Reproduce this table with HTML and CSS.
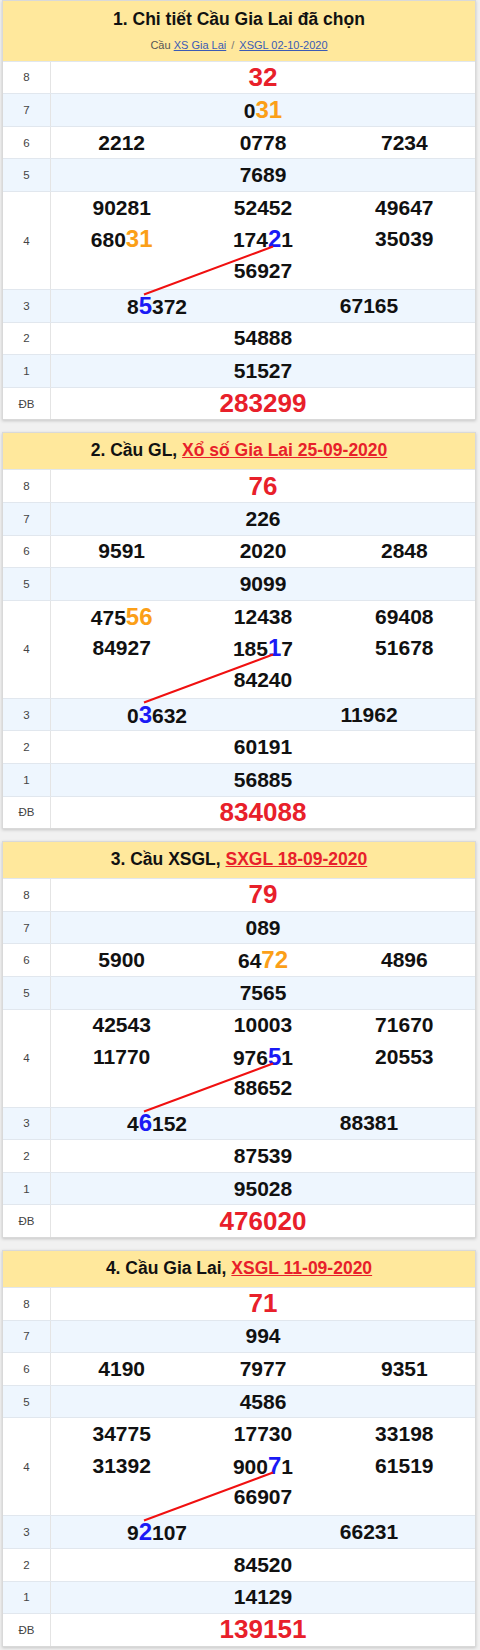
FILE: index.html
```html
<!DOCTYPE html>
<html lang="vi">
<head>
<meta charset="utf-8">
<title>Cầu Gia Lai</title>
<link rel="stylesheet" href="styles.css">
</head>
<body>

<section class="card">
  <div class="card-head card-head--main">
    <div class="title">1. Chi tiết Cầu Gia Lai đã chọn</div>
    <div class="sub">Cầu <a href="#">XS Gia Lai</a><span class="sep">/</span><a href="#">XSGL 02-10-2020</a></div>
  </div>
  <div class="tbody">
    <div class="row"><div class="lbl">8</div><div class="nums c1"><span class="red">32</span></div></div>
    <div class="row alt"><div class="lbl">7</div><div class="nums c1"><span>0<span class="o">31</span></span></div></div>
    <div class="row"><div class="lbl">6</div><div class="nums c3"><span>2212</span><span>0778</span><span>7234</span></div></div>
    <div class="row alt"><div class="lbl">5</div><div class="nums c1"><span>7689</span></div></div>
    <div class="row tall"><div class="lbl">4</div><div class="nums c3"><span>90281</span><span>52452</span><span>49647</span><span>680<span class="o">31</span></span><span>174<span class="b">2</span>1</span><span>35039</span><span class="mid">56927</span></div></div>
    <div class="row alt"><div class="lbl">3</div><div class="nums c2"><span>8<span class="b">5</span>372</span><span>67165</span></div></div>
    <div class="row"><div class="lbl">2</div><div class="nums c1"><span>54888</span></div></div>
    <div class="row alt"><div class="lbl">1</div><div class="nums c1"><span>51527</span></div></div>
    <div class="row"><div class="lbl">ĐB</div><div class="nums c1"><span class="red">283299</span></div></div>
    <svg class="line" aria-hidden="true"><line x1="270" y1="185.5" x2="141" y2="233.5"/></svg>
  </div>
</section>

<section class="card">
  <div class="card-head">
    <div class="title">2. Cầu GL, <a href="#">Xổ số Gia Lai 25-09-2020</a></div>
  </div>
  <div class="tbody">
    <div class="row"><div class="lbl">8</div><div class="nums c1"><span class="red">76</span></div></div>
    <div class="row alt"><div class="lbl">7</div><div class="nums c1"><span>226</span></div></div>
    <div class="row"><div class="lbl">6</div><div class="nums c3"><span>9591</span><span>2020</span><span>2848</span></div></div>
    <div class="row alt"><div class="lbl">5</div><div class="nums c1"><span>9099</span></div></div>
    <div class="row tall"><div class="lbl">4</div><div class="nums c3"><span>475<span class="o">56</span></span><span>12438</span><span>69408</span><span>84927</span><span>185<span class="b">1</span>7</span><span>51678</span><span class="mid">84240</span></div></div>
    <div class="row alt"><div class="lbl">3</div><div class="nums c2"><span>0<span class="b">3</span>632</span><span>11962</span></div></div>
    <div class="row"><div class="lbl">2</div><div class="nums c1"><span>60191</span></div></div>
    <div class="row alt"><div class="lbl">1</div><div class="nums c1"><span>56885</span></div></div>
    <div class="row"><div class="lbl">ĐB</div><div class="nums c1"><span class="red">834088</span></div></div>
    <svg class="line" aria-hidden="true"><line x1="270" y1="185.5" x2="141" y2="233.5"/></svg>
  </div>
</section>

<section class="card">
  <div class="card-head">
    <div class="title">3. Cầu XSGL, <a href="#">SXGL 18-09-2020</a></div>
  </div>
  <div class="tbody">
    <div class="row"><div class="lbl">8</div><div class="nums c1"><span class="red">79</span></div></div>
    <div class="row alt"><div class="lbl">7</div><div class="nums c1"><span>089</span></div></div>
    <div class="row"><div class="lbl">6</div><div class="nums c3"><span>5900</span><span>64<span class="o">72</span></span><span>4896</span></div></div>
    <div class="row alt"><div class="lbl">5</div><div class="nums c1"><span>7565</span></div></div>
    <div class="row tall"><div class="lbl">4</div><div class="nums c3"><span>42543</span><span>10003</span><span>71670</span><span>11770</span><span>976<span class="b">5</span>1</span><span>20553</span><span class="mid">88652</span></div></div>
    <div class="row alt"><div class="lbl">3</div><div class="nums c2"><span>4<span class="b">6</span>152</span><span>88381</span></div></div>
    <div class="row"><div class="lbl">2</div><div class="nums c1"><span>87539</span></div></div>
    <div class="row alt"><div class="lbl">1</div><div class="nums c1"><span>95028</span></div></div>
    <div class="row"><div class="lbl">ĐB</div><div class="nums c1"><span class="red">476020</span></div></div>
    <svg class="line" aria-hidden="true"><line x1="270" y1="185.5" x2="141" y2="233.5"/></svg>
  </div>
</section>

<section class="card">
  <div class="card-head">
    <div class="title">4. Cầu Gia Lai, <a href="#">XSGL 11-09-2020</a></div>
  </div>
  <div class="tbody">
    <div class="row"><div class="lbl">8</div><div class="nums c1"><span class="red">71</span></div></div>
    <div class="row alt"><div class="lbl">7</div><div class="nums c1"><span>994</span></div></div>
    <div class="row"><div class="lbl">6</div><div class="nums c3"><span>4190</span><span>7977</span><span>9351</span></div></div>
    <div class="row alt"><div class="lbl">5</div><div class="nums c1"><span>4586</span></div></div>
    <div class="row tall"><div class="lbl">4</div><div class="nums c3"><span>34775</span><span>17730</span><span>33198</span><span>31392</span><span>900<span class="b">7</span>1</span><span>61519</span><span class="mid">66907</span></div></div>
    <div class="row alt"><div class="lbl">3</div><div class="nums c2"><span>9<span class="b">2</span>107</span><span>66231</span></div></div>
    <div class="row"><div class="lbl">2</div><div class="nums c1"><span>84520</span></div></div>
    <div class="row alt"><div class="lbl">1</div><div class="nums c1"><span>14129</span></div></div>
    <div class="row"><div class="lbl">ĐB</div><div class="nums c1"><span class="red">139151</span></div></div>
    <svg class="line" aria-hidden="true"><line x1="270" y1="185.5" x2="141" y2="233.5"/></svg>
  </div>
</section>

</body>
</html>
```

FILE: styles.css
```css
html, body {
  margin: 0;
}
body {
  padding: 0 4px 0 2px;
  background: #f1f1f1;
  font-family: "Liberation Sans", Arial, sans-serif;
  color: #111;
}
.card {
  background: #fff;
  border: 1px solid #d9d9d9;
  margin-bottom: 12px;
  box-shadow: 0 1px 3px rgba(0, 0, 0, 0.18);
}
.card-head {
  background: #ffe89c;
  text-align: center;
  height: 36px;
  box-sizing: border-box;
  padding-top: 7px;
}
.card-head--main {
  height: 59.7px;
  padding-top: 8px;
}
.title {
  font-weight: bold;
  font-size: 17.5px;
  line-height: 21px;
  color: #111;
}
.title a {
  color: #e8202a;
}
.sub {
  font-size: 11px;
  line-height: 16px;
  color: #555;
  margin-top: 7px;
}
.sub a {
  color: #3b5bb5;
}
.sep {
  margin: 0 5px;
  color: #777;
}
.tbody {
  position: relative;
}
.row {
  display: grid;
  grid-template-columns: 48px 1fr;
  height: 32.6px;
  box-sizing: border-box;
  border-top: 1px solid #e1e7ee;
}
.row.alt {
  background: #eef6fe;
}
.row.tall {
  height: 98px;
}
.lbl {
  border-right: 1px solid #e4e4e4;
  display: flex;
  align-items: center;
  justify-content: center;
  font-size: 11.5px;
  color: #444;
}
.nums {
  display: grid;
  align-items: center;
  justify-items: center;
  font-weight: bold;
  font-size: 21px;
  color: #111;
}
.c1 { grid-template-columns: 1fr; }
.c2 { grid-template-columns: repeat(2, 1fr); }
.c3 { grid-template-columns: repeat(3, 1fr); }
.tall .nums {
  grid-template-rows: repeat(3, 31.5px);
  align-content: start;
}
.tall .nums .mid {
  grid-column: 2;
}
.red {
  color: #e8202a;
  font-size: 26px;
}
.o {
  color: #fb9f18;
  font-size: 24px;
}
.b {
  color: #1a1af5;
  font-size: 24px;
}
.line {
  position: absolute;
  left: 0;
  top: 0;
  width: 100%;
  height: 100%;
  pointer-events: none;
  overflow: visible;
}
.line line {
  stroke: #f01010;
  stroke-width: 2;
}
```
